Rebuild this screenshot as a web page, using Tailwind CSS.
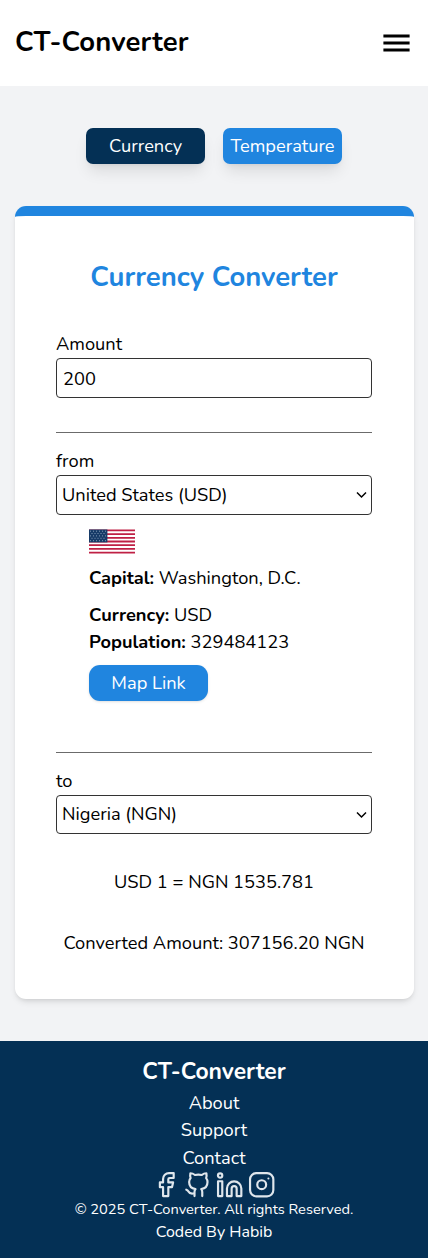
<!DOCTYPE html>
<html lang="en">
<head>
<meta charset="utf-8">
<meta name="viewport" content="width=device-width, initial-scale=1">
<title>CT-Converter</title>
<script src="https://cdn.jsdelivr.net/npm/@tailwindcss/browser@4"></script>
</head>
<body class="bg-[#f2f3f5] text-black font-['Nunito','Lato',sans-serif] text-[18.26px] leading-[27px] whitespace-nowrap">
<header class="flex h-[86px] items-center justify-between bg-white pr-[18px] pl-[15px]">
  <h1 class="pb-[2px] text-[27.43px] leading-[40px] font-bold tracking-[0.15px]">CT-Converter</h1>
  <svg class="h-[18px] w-[27px]" viewBox="0 0 27 18"><path d="M.4.5h26.2v3H.4zM.4 7.5h26.2v3H.4zM.4 14.5h26.2v3H.4z"/></svg>
</header>
<main class="px-[14.5px] pt-[42px]">
  <div class="flex justify-center gap-[18px] text-white">
    <button class="h-[36px] w-[119px] rounded-[7px] bg-[#043055] shadow-lg">Currency</button>
    <button class="h-[36px] w-[119px] rounded-[7px] bg-[#2085df] shadow-lg">Temperature</button>
  </div>
  <section class="mt-[42px] h-[793px] rounded-[11px] border-t-[10px] border-[#2085df] bg-white px-[41.5px] pt-[41px] shadow-md">
    <h2 class="h-[40px] text-center text-[27.43px] leading-[40px] font-bold text-[#2085df]">Currency Converter</h2>
    <label class="mt-[34px] block h-[27px]">Amount</label>
    <div class="flex h-[40px] items-center rounded-[4px] border border-[#333] px-[6px] pt-[2px]"><span>200</span></div>
    <div class="mt-[34px] h-px bg-[#6b6b6b]"></div>
    <label class="mt-[15px] block h-[27px]">from</label>
    <div class="flex h-[40px] items-center justify-between rounded-[4px] border border-[#333] pr-[4px] pl-[5px]">
      <span>United States (USD)</span>
      <svg class="h-[8px] w-[11px]" viewBox="0 0 11 8" fill="none" stroke="#000" stroke-width="1.5"><path d="M1 1.5 5.5 6 10 1.5"/></svg>
    </div>
    <div class="px-[33px] pt-[14px]">
      <svg class="block h-[25px] w-[46px]" viewBox="0 0 46 25">
        <g transform="translate(0 .5)">
          <rect width="46" height="24" fill="#fff"/>
          <path d="M0 .92h46M0 4.61h46M0 8.3h46M0 12h46M0 15.69h46M0 19.38h46M0 23.07h46" stroke="#bf2045" stroke-width="1.85"/>
          <rect width="18.4" height="12.9" fill="#173b68"/>
          <path d="M1 1.7h17M2.5 4h15M1 6.4h17M2.5 8.8h15M1 11.2h17" stroke="#8fa6bf" stroke-width=".9" stroke-dasharray="1 2"/>
        </g>
      </svg>
      <p class="mt-[11px]"><b>Capital:</b> Washington, D.C.</p>
      <p class="mt-[10px]"><b>Currency:</b> USD</p>
      <p><b>Population:</b> 329484123</p>
      <button class="mt-[9px] block h-[36px] w-[119px] rounded-[11px] bg-[#2085df] text-white shadow-sm">Map Link</button>
    </div>
    <div class="mt-[51px] h-px bg-[#6b6b6b]"></div>
    <label class="mt-[15px] block h-[27px]">to</label>
    <div class="flex h-[39px] items-center justify-between rounded-[4px] border border-[#333] pr-[4px] pl-[5px]">
      <span>Nigeria (NGN)</span>
      <svg class="h-[8px] w-[11px]" viewBox="0 0 11 8" fill="none" stroke="#000" stroke-width="1.5"><path d="M1 1.5 5.5 6 10 1.5"/></svg>
    </div>
    <p class="mt-[35px] text-center">USD 1 = NGN 1535.781</p>
    <p class="mt-[34px] text-center">Converted Amount: 307156.20 NGN</p>
  </section>
</main>
<footer class="mt-[42px] flex h-[217px] flex-col items-center bg-[#043055] pt-[15px] text-white">
  <h3 class="h-[34px] text-[22.86px] leading-[32px] font-bold">CT-Converter</h3>
  <p>About</p>
  <p>Support</p>
  <p class="mt-px">Contact</p>
  <div class="flex h-[26px] items-center gap-[4.6px] text-[#dfe6ec]">
    <svg class="size-[27.4px] shrink-0" viewBox="0 0 24 24" fill="none" stroke="currentColor" stroke-width="1.9" stroke-linejoin="round"><path d="M19 1.8h-4.1a5.2 5.2 0 0 0-5.2 5.2v3H6.9v4.2h2.8V22h4.6v-7.8h3.2l1-4.2h-4.2V7.2A1.1 1.1 0 0 1 15.4 6.1H19z"/></svg>
    <svg class="size-[27.4px] shrink-0" viewBox="0 0 24 24" fill="none" stroke="currentColor" stroke-width="1.9" stroke-linecap="round" stroke-linejoin="round"><path d="M16 22v-3.5a3.6 3.6 0 0 0-.9-2.6c3-.4 5.5-1.8 5.5-6.2A5.2 5.2 0 0 0 19.4 6.2c.5-1.3.5-2.7.2-4.2-1.5 0-2.9.6-4 1.5a14 14 0 0 0-6 0C8.4 2.600 7.1 2 5.6 2c-.3 1.5-.3 2.9.2 4.2a5.2 5.2 0 0 0-1.3 3.5c0 4.4 2.6 5.8 5.6 6.2a3.6 3.6 0 0 0-.9 2.6V22M9.2 19.5c-3 .8-4.7-.3-5.3-1.5-.5-.9-1-1.4-1.9-1.6"/></svg>
    <svg class="size-[27.4px] shrink-0" viewBox="0 0 24 24" fill="none" stroke="currentColor" stroke-width="1.9" stroke-linejoin="round"><circle cx="3.6" cy="4" r="1.9"/><path d="M1.8 9h3.7v13H1.8zM9.6 22v-6.6a6.3 6.3 0 0 1 12.6 0V22h-4.1v-6.5a2.2 2.2 0 0 0-4.4 0V22z"/></svg>
    <svg class="size-[27.4px] shrink-0" viewBox="0 0 24 24" fill="none" stroke="currentColor" stroke-width="1.9"><rect x="1.8" y="1.8" width="20.4" height="20.4" rx="5.5"/><circle cx="12" cy="12" r="3.9"/><circle cx="17.9" cy="6.5" r=".9" fill="currentColor" stroke="none"/></svg>
  </div>
  <p class="text-[14.63px] leading-[22px] tracking-[-0.02px]">© 2025 CT-Converter. All rights Reserved.</p>
  <p class="mt-px text-[16px] leading-[23px]">Coded By Habib</p>
</footer>
</body>
</html>
